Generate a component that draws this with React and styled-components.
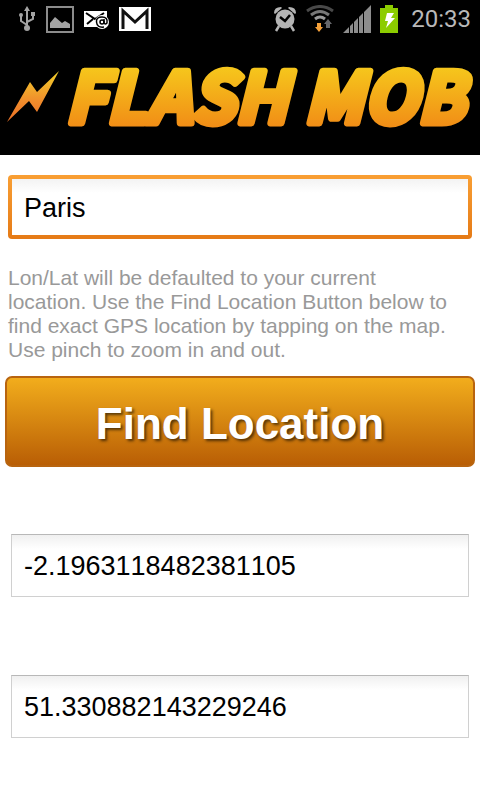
import React, { useState } from 'react';
import styled, { createGlobalStyle, css } from 'styled-components';

function StatusBar() {
  return (
    <Status>
      <IconGroup>
        <svg width="18" height="26" viewBox="0 0 18 26" fill="none" stroke="#a3a3a3" strokeWidth="2">
          <path d="M9 3V22M9 19L3 15V9M9 16L15 13V8" />
          <path d="M9 0L12 5H6Z" fill="#a3a3a3" stroke="none" />
          <circle cx="9" cy="22" r="3" fill="#a3a3a3" stroke="none" />
          <circle cx="3" cy="9" r="2" fill="#a3a3a3" stroke="none" />
          <path d="M13 6H17V10H13Z" fill="#a3a3a3" stroke="none" />
        </svg>
        <svg width="28" height="27" viewBox="0 0 28 27">
          <path d="M1 1H27V26H1Z" fill="none" stroke="#8c8c8c" strokeWidth="2" />
          <path d="M4 22V17L9 11L16 17L19 15L24 18V22Z" fill="#a3a3a3" />
        </svg>
        <svg width="25" height="20" viewBox="0 0 25 20">
          <path d="M0 2H23V18H0Z" fill="#fff" />
          <path d="M2 4L11 10L20 4M3 15L9 10" fill="none" stroke="#000" strokeWidth="2" />
          <circle cx="18" cy="13" r="7" fill="#fff" />
          <circle cx="18" cy="13" r="2" fill="none" stroke="#000" strokeWidth="1.5" />
          <path d="M20 10V14Q21 16 23 14Q24 8 18 8Q12 8 12.500 13Q13 19 20 18" fill="none" stroke="#000" strokeWidth="1.500" />
        </svg>
        <svg width="32" height="24" viewBox="0 0 32 24">
          <path d="M0 0H32V24H0Z" fill="#fff" />
          <path d="M4 22V4L16 15L28 4V22" fill="none" stroke="#111" strokeWidth="3" />
        </svg>
      </IconGroup>
      <IconGroup $right>
        <svg width="24" height="26" viewBox="0 0 24 26">
          <path d="M6 20L3 25M18 20L21 25" stroke="#b4b4b4" strokeWidth="2.500" />
          <path d="M1 7Q1 1 8 1L9 2L2 8ZM23 7Q23 1 16 1L15 2L22 8Z" fill="#b4b4b4" />
          <circle cx="12" cy="13" r="9.500" fill="#b4b4b4" />
          <path d="M7 11L12 15L17 9" fill="none" stroke="#000" strokeWidth="2.500" />
        </svg>
        <svg width="28" height="28" viewBox="0 0 28 28">
          <g fill="none" strokeWidth="3">
            <path d="M1 6Q14 -3 27 6" stroke="#494949" />
            <path d="M5 10Q14 3 23 10" stroke="#777" />
            <path d="M9 14Q14 10 19 14" stroke="#999" />
          </g>
          <path d="M11 18H15V22H17L13 27L9 22H11Z" fill="#f5a13a" />
          <path d="M20 23V19H18L22 14L26 19H24V23Z" fill="#66676b" />
        </svg>
        <svg width="28" height="28" viewBox="0 0 28 28">
          <path d="M0 28L6 22V28ZM7 21L10 18V28H7ZM11 17L15 13V28H11ZM16 12L20 8V28H16ZM21 7L28 0V28H21Z" fill="#8d8d8d" />
        </svg>
        <svg width="18" height="28" viewBox="0 0 18 28">
          <path d="M5 0H13V3H18V28H0V3H5Z" fill="#8ccc00" />
          <path d="M7 8H14L11 13H15L6 23L8 16H5Z" fill="#fff" />
        </svg>
        <Clock>20:33</Clock>
      </IconGroup>
    </Status>
  );
}

function Logo() {
  return (
    <LogoTitle>
      <LogoSvg viewBox="0 0 480 117" role="img" aria-label="FLASH MOB">
        <defs>
          <linearGradient id="letters" gradientUnits="userSpaceOnUse" x1="0" y1="28" x2="0" y2="89">
            <stop offset="0" stopColor="#f6c81c" />
            <stop offset="1" stopColor="#f18d16" />
          </linearGradient>
          <linearGradient id="bolt" gradientUnits="userSpaceOnUse" x1="0" y1="32" x2="0" y2="84">
            <stop offset="0" stopColor="#f2d32a" />
            <stop offset="0.600" stopColor="#f08c2c" />
            <stop offset="1" stopColor="#ec6f25" />
          </linearGradient>
        </defs>
        <path d="M59 33L37 74L29 63L7 84L30 44L37 54Z" fill="url(#bolt)" />
        <LogoText x="65" y="85">
          FLASH MOB
        </LogoText>
      </LogoSvg>
    </LogoTitle>
  );
}

function App() {
  const [Place, setPlace] = useState('Paris');
  const [Lon, setLon] = useState('-2.1963118482381105');
  const [Lat, setLat] = useState('51.330882143229246');

  const HandleSubmit = (e) => {
    e.preventDefault();
  };

  return (
    <>
      <GlobalStyle />
      <Header>
        <StatusBar />
        <Logo />
      </Header>
      <Form onSubmit={HandleSubmit}>
        <Field
          $active
          type="text"
          aria-label="Location"
          value={Place}
          onChange={(e) => setPlace(e.target.value)}
        />
        <Hint>
          Lon/Lat will be defaulted to your current location. Use the Find Location Button below to
          find exact GPS location by tapping on the map. Use pinch to zoom in and out.
        </Hint>
        <FindButton type="submit">Find Location</FindButton>
        <Coordinates>
          <Field
            type="text"
            aria-label="Longitude"
            value={Lon}
            onChange={(e) => setLon(e.target.value)}
          />
          <Field
            type="text"
            aria-label="Latitude"
            value={Lat}
            onChange={(e) => setLat(e.target.value)}
          />
        </Coordinates>
      </Form>
    </>
  );
}

export default App;

const GlobalStyle = createGlobalStyle`
  * {
    box-sizing: border-box;
  }
  body {
    margin: 0;
    background-color: #fff;
    font-family: 'Liberation Sans', Arial, sans-serif;
  }
`;

const Header = styled.header`
  background-color: #000;
`;

const Status = styled.div`
  display: flex;
  justify-content: space-between;
  align-items: center;
  height: 38px;
  padding: 0 9px 0 18px;
`;

const IconGroup = styled.div`
  display: flex;
  align-items: center;
  gap: ${(props) => (props.$right ? '9px' : '10px')};
`;

const Clock = styled.span`
  margin-left: 4px;
  color: #b9b9b9;
  font-family: Roboto, sans-serif;
  font-size: 24px;
  line-height: 38px;
`;

const LogoTitle = styled.h1`
  margin: 0;
`;

const LogoSvg = styled.svg`
  display: block;
  width: 100%;
`;

const LogoText = styled.text`
  fill: url(#letters);
  stroke: url(#letters);
  stroke-width: 7px;
  stroke-linejoin: round;
  font-family: 'Noto Sans CJK JP', sans-serif;
  font-size: 70px;
  font-style: italic;
  font-weight: 700;
`;

const Form = styled.form`
  display: flex;
  flex-direction: column;
  padding: 20px 5px 60px;
`;

const Field = styled.input`
  height: 63px;
  padding: 2px 12px 0;
  border: 1px solid #d0d0d0;
  border-top-color: #b8b8b8;
  border-radius: 0;
  outline: none;
  background: linear-gradient(#f0f0f0, #fff 14px);
  color: #000;
  font-family: inherit;
  font-size: 27px;
  font-kerning: none;

  ${(props) =>
    props.$active &&
    css`
      height: 64px;
      margin: 0 3px;
      border: 4px solid transparent;
      border-radius: 4px;
      background: linear-gradient(#f3f3f3, #fff 14px) padding-box,
        linear-gradient(#f99f34, #e57a16) border-box;
    `}
`;

const Hint = styled.p`
  margin: 27px 3px 14px;
  padding-right: 15px;
  color: #999;
  font-size: 21px;
  line-height: 24px;
`;

const FindButton = styled.button`
  height: 91px;
  padding-top: 6px;
  border: 2px solid #b8640f;
  border-radius: 7px;
  background: linear-gradient(#f2ad1c, #b95e05);
  color: #fff;
  font-family: inherit;
  font-size: 44px;
  font-weight: 700;
  text-shadow: 2px 2px 3px rgba(0, 0, 0, 0.6);
  cursor: pointer;
`;

const Coordinates = styled.div`
  display: flex;
  flex-direction: column;
  gap: 78px;
  margin: 67px 6px 0;
`;
